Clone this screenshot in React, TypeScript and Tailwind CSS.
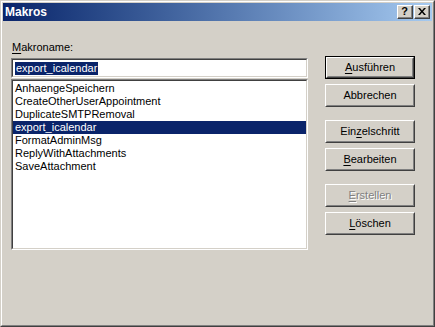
import React from 'react';

const macros = [
  'AnhaengeSpeichern',
  'CreateOtherUserAppointment',
  'DuplicateSMTPRemoval',
  'export_icalendar',
  'FormatAdminMsg',
  'ReplyWithAttachments',
  'SaveAttachment',
];

const font = { fontFamily: '"Liberation Sans", Arial, sans-serif' };

// label text with one underlined access key
const Key = ({ text, at }: { text: string; at: number }) => {
  if (at < 0) return <>{text}</>;
  return (
    <>
      {text.slice(0, at)}
      <span className="underline underline-offset-[2px]">{text[at]}</span>
      {text.slice(at + 1)}
    </>
  );
};

const Button = ({
  label,
  keyAt = -1,
  isDefault = false,
  disabled = false,
}: {
  label: string;
  keyAt?: number;
  isDefault?: boolean;
  disabled?: boolean;
}) => {
  const face = (
    <div className="h-full border border-t-white border-l-white border-r-[#404040] border-b-[#404040]">
      <div className="h-full flex items-center justify-center border border-t-[#d4d0c8] border-l-[#d4d0c8] border-r-[#808080] border-b-[#808080]">
        <span
          className={
            disabled
              ? 'text-[#808080] [text-shadow:1px_1px_0_#ffffff]'
              : 'text-black'
          }
        >
          <Key text={label} at={keyAt} />
        </span>
      </div>
    </div>
  );
  return (
    <div className="w-[90px] h-[23px] text-[11px] leading-[13px]">
      {isDefault ? <div className="h-full border border-black">{face}</div> : face}
    </div>
  );
};

const Sunken = ({ className, children }: { className: string; children: React.ReactNode }) => (
  <div className={`border border-t-[#808080] border-l-[#808080] border-r-white border-b-white ${className}`}>
    <div className="h-full border border-t-[#404040] border-l-[#404040] border-r-[#d4d0c8] border-b-[#d4d0c8] bg-white">
      {children}
    </div>
  </div>
);

const App: React.FC = () => {
  const selected = 'export_icalendar';

  return (
    <div style={font} className="w-[435px] h-[327px] bg-[#d4d0c8] text-[11px] leading-[13px] text-black">
      <div className="h-full border border-t-[#d4d0c8] border-l-[#d4d0c8] border-r-[#404040] border-b-[#404040]">
        <div className="h-full flex flex-col border border-t-white border-l-white border-r-[#808080] border-b-[#808080] p-px">
          {/* Title bar */}
          <div className="h-[18px] flex items-center justify-between bg-linear-to-r from-[#0a246a] to-[#a6caf0] pl-[2px] pr-[2px]">
            <span className="text-white font-bold text-[12px]">Makros</span>
            <div className="flex gap-[1px]">
              <div className="w-[16px] h-[14px] bg-[#d4d0c8] border border-t-white border-l-white border-r-[#404040] border-b-[#404040]">
                <div className="h-full flex items-center justify-center border-r border-b border-[#808080] text-[11px] font-bold leading-none">
                  ?
                </div>
              </div>
              <div className="w-[16px] h-[14px] bg-[#d4d0c8] border border-t-white border-l-white border-r-[#404040] border-b-[#404040]">
                <div className="h-full flex items-center justify-center border-r border-b border-[#808080]">
                  <svg width="8" height="7" viewBox="0 0 8 7">
                    <path d="M0 0h2l2 2.5L6 0h2L5 3.5 8 7H6L4 4.5 2 7H0l3-3.5z" fill="#000" />
                  </svg>
                </div>
              </div>
            </div>
          </div>

          {/* Body */}
          <div className="flex pl-[8px]">
            <div className="w-[297px] pt-[20px]">
              <div className="mb-[4px] pl-px">
                <Key text="Makroname:" at={0} />
              </div>
              <Sunken className="h-[20px]">
                <div className="h-full flex items-center pl-[2px]">
                  <span className="bg-[#0a246a] text-white px-[1px]">{selected}</span>
                </div>
              </Sunken>
              <Sunken className="h-[171px] mt-px">
                <div className="pt-px">
                  {macros.map((m) => (
                    <div
                      key={m}
                      className={`h-[13px] pl-[2px] whitespace-nowrap ${
                        m === selected ? 'bg-[#0a246a] text-white' : ''
                      }`}
                    >
                      {m}
                    </div>
                  ))}
                </div>
              </Sunken>
            </div>

            <div className="ml-[17px] pt-[35px] flex flex-col">
              <Button label="Ausführen" keyAt={0} isDefault />
              <div className="mt-[5px]">
                <Button label="Abbrechen" />
              </div>
              <div className="mt-[13px]">
                <Button label="Einzelschritt" keyAt={3} />
              </div>
              <div className="mt-[5px]">
                <Button label="Bearbeiten" keyAt={0} />
              </div>
              <div className="mt-[13px]">
                <Button label="Erstellen" keyAt={0} disabled />
              </div>
              <div className="mt-[5px]">
                <Button label="Löschen" keyAt={0} />
              </div>
            </div>
          </div>
        </div>
      </div>
    </div>
  );
};

export default App;
